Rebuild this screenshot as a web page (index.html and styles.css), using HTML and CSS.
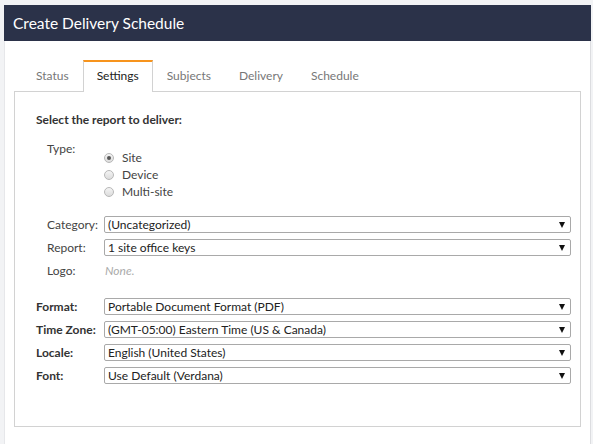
FILE: index.html
```html
<!DOCTYPE html>
<html>
<head>
<meta charset="utf-8">
<link rel="stylesheet" href="styles.css">
</head>
<body>
<div class="dialog">
  <div class="dialog-header">Create Delivery Schedule</div>
  <div class="dialog-body">
    <div class="tabs">
      <div class="tab">Status</div>
      <div class="tab active">Settings</div>
      <div class="tab">Subjects</div>
      <div class="tab">Delivery</div>
      <div class="tab">Schedule</div>
    </div>
    <div class="panel">
      <div class="section-title">Select the report to deliver:</div>
      <div class="type-row">
        <div class="sub-label">Type:</div>
        <div class="radios">
          <div class="radio-line"><span class="radio checked"></span>Site</div>
          <div class="radio-line"><span class="radio"></span>Device</div>
          <div class="radio-line"><span class="radio"></span>Multi-site</div>
        </div>
      </div>
      <div class="group">
        <div class="row"><div class="sub-label">Category:</div><div class="select"><span class="val">(Uncategorized)</span><span class="arrow"></span></div></div>
        <div class="row"><div class="sub-label">Report:</div><div class="select"><span class="val">1 site office keys</span><span class="arrow"></span></div></div>
        <div class="row"><div class="sub-label">Logo:</div><div class="none">None.</div></div>
      </div>
      <div class="group2">
        <div class="row"><div class="main-label">Format:</div><div class="select"><span class="val">Portable Document Format (PDF)</span><span class="arrow"></span></div></div>
        <div class="row"><div class="main-label">Time Zone:</div><div class="select"><span class="val">(GMT-05:00) Eastern Time (US &amp; Canada)</span><span class="arrow"></span></div></div>
        <div class="row"><div class="main-label">Locale:</div><div class="select"><span class="val">English (United States)</span><span class="arrow"></span></div></div>
        <div class="row"><div class="main-label">Font:</div><div class="select"><span class="val">Use Default (Verdana)</span><span class="arrow"></span></div></div>
      </div>
    </div>
  </div>
</div>
</body>
</html>
```
FILE: styles.css
```css
* { box-sizing: border-box; }
html, body { margin: 0; padding: 0; }
body {
  background: #f2f3f5;
  font-family: Lato, "Open Sans", sans-serif;
  color: #333;
  height: 444px;
  overflow: hidden;
}
.dialog {
  margin: 5px 2px 0 4px;
  background: #fff;
  border-left: 1px solid #e6e7ea;
  border-right: 1px solid #dcdde0;
  height: 439px;
}
.dialog-header {
  height: 36px;
  background: #2b3249;
  color: #fff;
  font-size: 15.5px;
  line-height: 36px;
  padding-left: 9px;
  margin-left: -1px;
  margin-right: -1px;
}
.dialog-body {
  padding: 19px 9px 0 9px;
}
.tabs {
  display: flex;
  padding-left: 8px;
  height: 31px;
  position: relative;
  z-index: 1;
}
.tab {
  padding: 0 13px 2px;
  font-size: 12px;
  color: #777;
  line-height: 27px;
  border: 1px solid transparent;
  border-top-width: 2px;
  border-bottom: 0;
}
.tab.active {
  color: #222;
  background: #fff;
  border-color: #d2d2d2;
  border-top-color: #f7941d;
  height: 32px;
}
.panel {
  border: 1px solid #d2d2d2;
  height: 336px;
  padding: 20px 9px 0 21px;
}
.section-title {
  font-weight: bold;
  font-size: 12px;
  line-height: 16px;
  color: #333;
}
.type-row {
  display: flex;
  margin-top: 12px;
  padding-left: 11px;
}
.sub-label {
  width: 57px;
  flex: none;
  font-size: 12px;
  line-height: 17px;
  color: #444;
}
.radios {
  margin-top: 9px;
}
.radio-line {
  display: flex;
  align-items: center;
  height: 17px;
  font-size: 12px;
  color: #444;
}
.radio {
  width: 10px;
  height: 10px;
  border-radius: 50%;
  border: 1px solid #b8b8b8;
  background: linear-gradient(#f4f4f4, #dcdcdc);
  margin-right: 8px;
  position: relative;
}
.radio.checked::after {
  content: "";
  position: absolute;
  left: 2px;
  top: 2px;
  width: 4px;
  height: 4px;
  border-radius: 50%;
  background: #555;
}
.group {
  margin-top: 13px;
  padding-left: 11px;
}
.group2 {
  margin-top: 13px;
}
.row {
  display: flex;
  align-items: center;
  height: 23px;
}
.main-label {
  width: 68px;
  flex: none;
  font-weight: bold;
  font-size: 12px;
  color: #333;
}
.select {
  flex: 1;
  height: 17px;
  border: 1px solid #a9a9a9;
  border-radius: 2px;
  display: flex;
  align-items: center;
  justify-content: space-between;
  padding: 0 5px 0 3px;
  font-size: 12px;
  color: #222;
}
.arrow {
  width: 0;
  height: 0;
  border-left: 3.5px solid transparent;
  border-right: 3.5px solid transparent;
  border-top: 6px solid #111;
}
.none {
  font-size: 12px;
  font-style: italic;
  color: #aaa;
  padding-left: 1px;
}
```
